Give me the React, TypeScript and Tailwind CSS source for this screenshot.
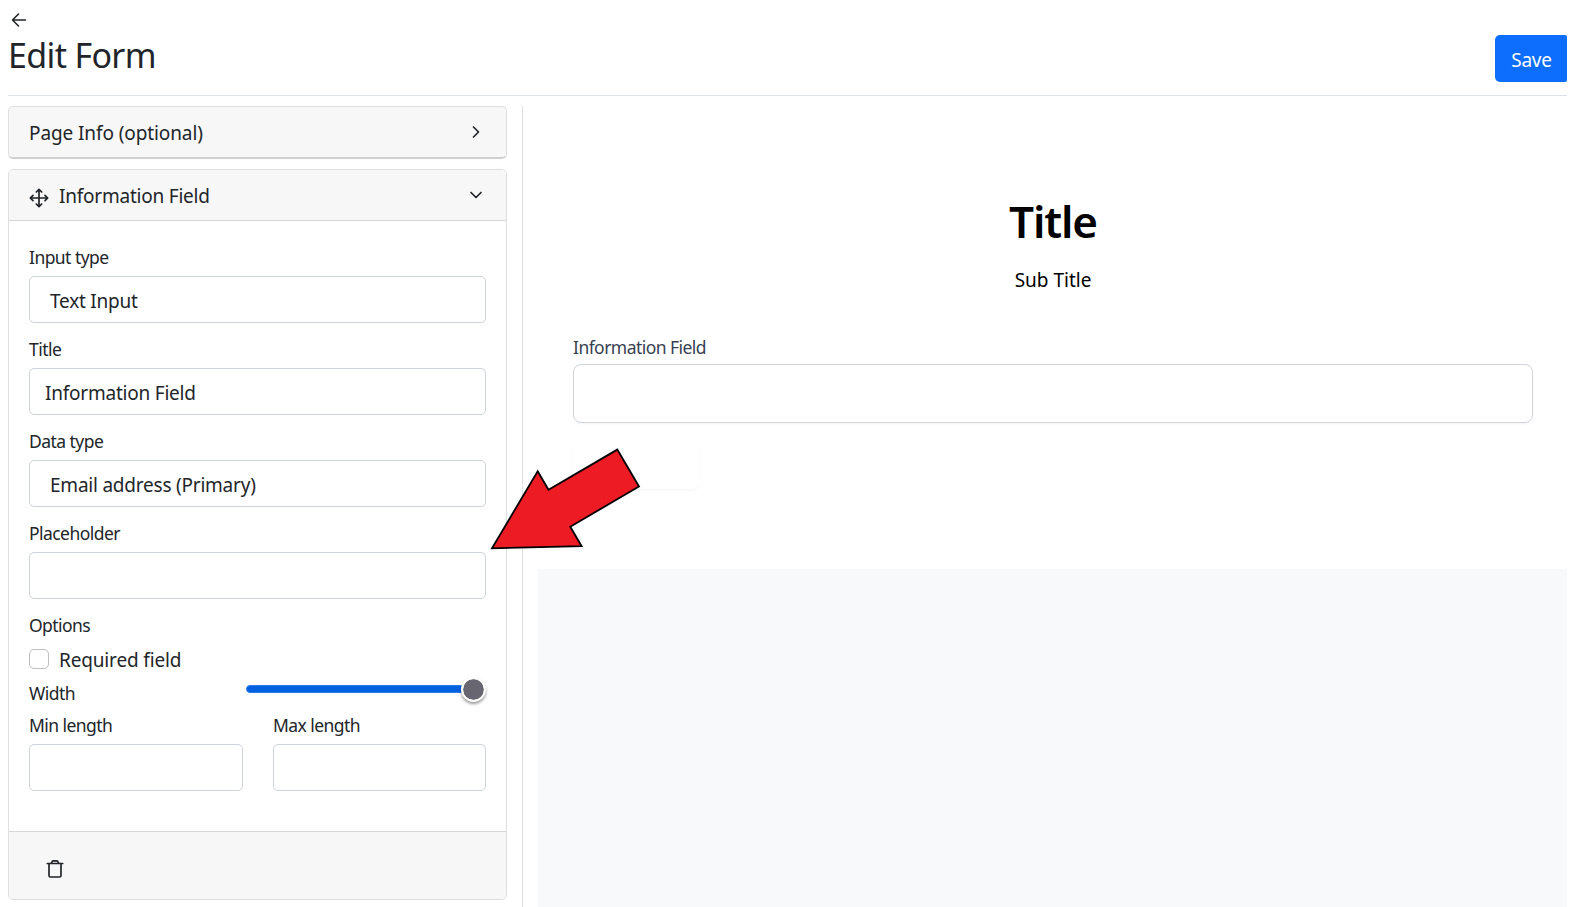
import type { ReactNode } from "react";

function Label({ children, className = "" }: { children: ReactNode; className?: string }) {
  return (
    <div className={`h-6 text-[17.5px] leading-[25px] tracking-[-0.55px] whitespace-nowrap ${className}`}>{children}</div>
  );
}

function Box({ children, className = "" }: { children?: ReactNode; className?: string }) {
  return (
    <div
      className={`mt-[7px] flex h-[47px] items-center rounded-[5px] border border-[#ced4da] bg-white pt-[4px] text-[19px] tracking-[-0.22px] whitespace-nowrap ${className}`}
    >
      {children}
    </div>
  );
}

function Field({ label, value, inset = "pl-[15px]" }: { label: string; value?: string; inset?: string }) {
  return (
    <div className="mb-[14px]">
      <Label>{label}</Label>
      <Box className={inset}>{value}</Box>
    </div>
  );
}

function Chevron({ d }: { d: string }) {
  return (
    <svg width="20" height="20" viewBox="0 0 20 20" fill="none" stroke="#212529" strokeWidth="1.7" strokeLinecap="round" strokeLinejoin="round">
      <path d={d} />
    </svg>
  );
}

function MoveIcon() {
  return (
    <svg className="mt-[5px] mr-[10px]" width="20" height="20" viewBox="0 0 20 20" fill="none" stroke="#212529" strokeWidth="1.7" strokeLinecap="round" strokeLinejoin="round">
      <path d="M10 1.5v17M1.5 10h17M7.3 4 10 1.3 12.7 4M7.3 16l2.7 2.7 2.7-2.7M4 7.3 1.3 10 4 12.7M16 7.3l2.7 2.7-2.7 2.7" />
    </svg>
  );
}

function Sidebar() {
  return (
    <div className="w-[499px] shrink-0">
      <div className="flex h-[53px] items-center justify-between rounded-[5px] border border-b-2 border-[#dfdfdf] border-b-[#d0d0d0] bg-[#f7f7f7] pr-[20px] pl-5">
        <span className="pt-[2px] text-[19px] tracking-[-0.1px]">Page Info (optional)</span>
        <Chevron d="M7.5 5l5 5-5 5" />
      </div>

      <div className="mt-[10px] overflow-hidden rounded-[5px] border border-[#dfdfdf]">
        <div className="flex h-[51px] items-center justify-between border-b border-[#d6d6d6] bg-[#f7f7f7] pr-[20px] pl-5">
          <div className="flex items-center">
            <MoveIcon />
            <span className="pt-[2px] text-[19px] tracking-[-0.22px]">Information Field</span>
          </div>
          <Chevron d="M5 7.5l5 5 5-5" />
        </div>

        <div className="px-5 pt-6 pb-10">
          <Field label="Input type" value="Text Input" inset="pl-5" />
          <Field label="Title" value="Information Field" />
          <Field label="Data type" value="Email address (Primary)" inset="pl-5" />
          <Field label="Placeholder" />
          <Label>Options</Label>
          <div className="mt-[7px] flex h-[30px] items-center">
            <span className="size-5 rounded-[5px] border border-[#bfbfbf]" />
            <span className="ml-[10px] pt-[2px] text-[19px] tracking-[-0.15px]">Required field</span>
          </div>
          <div className="mt-[7px] flex h-6 justify-between">
            <Label>Width</Label>
            <div className="mt-1 flex h-2 w-[240px] items-center">
              <div className="h-2 grow rounded-l-full border border-[#2a78ee] bg-[#0060e0]" />
              <div className="relative top-[0.5px] -ml-[1px] size-[25px] rounded-full border-2 border-white bg-[#676671] bg-clip-padding shadow-[0_2px_3px_rgba(0,0,0,0.4)]" />
            </div>
          </div>
          <div className="mt-2 flex gap-[30px]">
            <div className="w-[214px]">
              <Label>Min length</Label>
              <Box />
            </div>
            <div className="w-[213px]">
              <Label>Max length</Label>
              <Box />
            </div>
          </div>
        </div>

        <div className="h-[68px] border-t border-[#d6d6d6] bg-[#f7f7f7] pt-[27px] pl-[36px]">
          <svg width="20" height="20" viewBox="0 0 20 20" fill="none" stroke="#212529" strokeWidth="1.7" strokeLinejoin="round" strokeLinecap="round">
            <path d="M2.3 4.5h15.4M4 4.5v12.1a1.4 1.4 0 0 0 1.4 1.4h9.2a1.4 1.4 0 0 0 1.4-1.4V4.5M6.4 4.4l.5-1.5a1.4 1.4 0 0 1 1.3-1h3.6a1.4 1.4 0 0 1 1.3 1l.5 1.5" />
          </svg>
        </div>
      </div>
    </div>
  );
}

function Preview() {
  return (
    <div className="flex grow flex-col border-l border-[#dee2e6] pl-[15px]">
      <div className="h-[463px] shrink-0 pt-[85px] pr-[34px] pl-[35px] text-black">
        <h2 className="text-center text-[44px] leading-[60px] font-semibold tracking-[-1.1px]">Title</h2>
        <p className="mt-[15px] text-center text-[19px] leading-[28px]">Sub Title</p>
        <Label className="mt-[41px] text-[#374151]">Information Field</Label>
        <div className="mt-[5px] h-[59px] rounded-[8px] border border-[#d1d5db] shadow-[0_1px_2px_rgba(0,0,0,0.05)]" />
        <div className="mt-[19px] h-[47px] w-[127px] rounded-[8px] shadow-[0_1px_2px_rgba(0,0,0,0.05)]" />
      </div>
      <div className="grow bg-[#f8f9fb]" />
    </div>
  );
}

export default function App() {
  return (
    <div className="relative flex h-[907px] w-[1572px] flex-col overflow-hidden bg-white pr-[5px] pl-2 text-[#212529] [font-family:'Noto_Sans',sans-serif]">
      <header className="flex h-[96px] shrink-0 justify-between border-b border-[#dee2e6]">
        <div>
          <svg className="mt-[10px] ml-[1px]" width="20" height="20" viewBox="0 0 20 20" fill="none" stroke="#212529" strokeWidth="1.6" strokeLinecap="round" strokeLinejoin="round">
            <path d="M16.5 10h-13M9.5 4l-6 6 6 6" />
          </svg>
          <h1 className="mt-[1px] text-[34px] leading-[49px] tracking-[-0.65px]">Edit Form</h1>
        </div>
        <button className="mt-[35px] h-[47px] w-[72px] rounded-l-[5px] rounded-r-[2px] bg-[#0d6efd] pt-[4px] pl-[1px] text-[19px] tracking-[-0.2px] text-white">
          Save
        </button>
      </header>
      <main className="mt-[10px] flex min-h-0 grow gap-[15px]">
        <Sidebar />
        <Preview />
      </main>
      <svg className="absolute top-[440px] left-[480px]" width="170" height="120" viewBox="480 440 170 120">
        <path d="M492 548.3 537.7 471.2 548.5 489.8 617.3 449.6 639 486.5 570.3 526.7 581.6 546.2Z" fill="#ed1c24" stroke="#000" strokeWidth="1.8" />
      </svg>
    </div>
  );
}
